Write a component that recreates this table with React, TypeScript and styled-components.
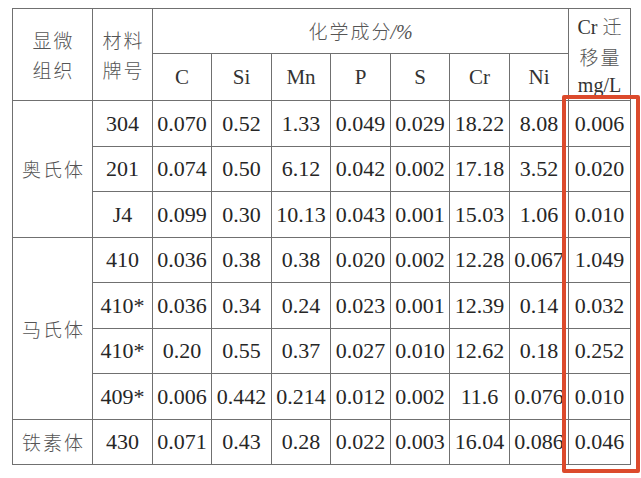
import React from "react";
import styled, { createGlobalStyle } from "styled-components";

const Global = createGlobalStyle`
  html, body { margin: 0; padding: 0; background: #ffffff; }
  body { width: 641px; height: 478px; overflow: hidden; }
`;

const Page = styled.div`
  position: relative;
  width: 641px;
  height: 478px;
  padding: 8px 0 0 12px;
  box-sizing: border-box;
  background: #fff;
`;

const Table = styled.table`
  border-collapse: collapse;
  table-layout: fixed;
  width: 618px;
  font-family: "Liberation Serif", "Noto Sans CJK SC", serif;
  font-size: 22px;
  color: #262626;
  td, th {
    border: 1px solid #707070;
    padding: 0;
    text-align: center;
    vertical-align: middle;
    font-weight: 400;
    white-space: nowrap;
    overflow: visible;
  }
`;

const Row = styled.tr<{ $h: number }>`
  height: ${(p) => p.$h}px;
`;

const Han = styled.span<{ $size?: number }>`
  font-family: "Noto Sans CJK SC", sans-serif;
  font-weight: 300;
  font-size: ${(p) => p.$size ?? 19}px;
  letter-spacing: 2px;
  margin-right: -2px;
  color: #555;
`;

const Lines = styled.div<{ $lh: number; $shift?: number }>`
  display: flex;
  flex-direction: column;
  align-items: center;
  line-height: ${(p) => p.$lh}px;
  padding-top: ${(p) => p.$shift ?? 0}px;
`;

const Sym = styled.span`
  font-size: 21px;
  color: #333;
`;

const Unit = styled.span`
  font-size: 20px;
  color: #333;
`;

const Slash = styled.span`
  font-family: "Liberation Serif", serif;
  font-style: italic;
  font-size: 20px;
  color: #555;
`;

const Highlight = styled.div`
  position: absolute;
  left: 562px;
  top: 95px;
  width: 78px;
  height: 378px;
  box-sizing: border-box;
  border: 4px solid #dc4a2c;
  border-radius: 2px;
  pointer-events: none;
`;

type DataRow = { grade: string; vals: string[] };

const groups: { name: string; rows: DataRow[] }[] = [
  {
    name: "奥氏体",
    rows: [
      { grade: "304", vals: ["0.070", "0.52", "1.33", "0.049", "0.029", "18.22", "8.08", "0.006"] },
      { grade: "201", vals: ["0.074", "0.50", "6.12", "0.042", "0.002", "17.18", "3.52", "0.020"] },
      { grade: "J4", vals: ["0.099", "0.30", "10.13", "0.043", "0.001", "15.03", "1.06", "0.010"] },
    ],
  },
  {
    name: "马氏体",
    rows: [
      { grade: "410", vals: ["0.036", "0.38", "0.38", "0.020", "0.002", "12.28", "0.067", "1.049"] },
      { grade: "410*", vals: ["0.036", "0.34", "0.24", "0.023", "0.001", "12.39", "0.14", "0.032"] },
      { grade: "410*", vals: ["0.20", "0.55", "0.37", "0.027", "0.010", "12.62", "0.18", "0.252"] },
      { grade: "409*", vals: ["0.006", "0.442", "0.214", "0.012", "0.002", "11.6", "0.076", "0.010"] },
    ],
  },
  {
    name: "铁素体",
    rows: [
      { grade: "430", vals: ["0.071", "0.43", "0.28", "0.022", "0.003", "16.04", "0.086", "0.046"] },
    ],
  },
];

const widths = [80, 60, 59, 60, 59, 60, 59, 60, 59, 62];
const elements = ["C", "Si", "Mn", "P", "S", "Cr", "Ni"];

export default function App() {
  let idx = 0;
  return (
    <Page>
      <Global />
      <Table>
        <colgroup>
          {widths.map((w, i) => (
            <col key={i} style={{ width: w }} />
          ))}
        </colgroup>
        <thead>
          <Row $h={44}>
            <th rowSpan={2}>
              <Lines $lh={30}>
                <Han>显微</Han>
                <Han>组织</Han>
              </Lines>
            </th>
            <th rowSpan={2}>
              <Lines $lh={30}>
                <Han>材料</Han>
                <Han>牌号</Han>
              </Lines>
            </th>
            <th colSpan={7}>
              <Han>化学成分</Han>
              <Slash>/%</Slash>
            </th>
            <th rowSpan={2}>
              <Lines $lh={29} $shift={2}>
                <span>
                  <Unit>Cr </Unit>
                  <Han>迁</Han>
                </span>
                <Han>移量</Han>
                <Unit>mg/L</Unit>
              </Lines>
            </th>
          </Row>
          <Row $h={45}>
            {elements.map((e) => (
              <th key={e}>
                <Sym>{e}</Sym>
              </th>
            ))}
          </Row>
        </thead>
        <tbody>
          {groups.map((g) =>
            g.rows.map((r, i) => {
              const h = idx % 2 === 0 ? 46 : 45;
              idx++;
              return (
                <Row $h={h} key={g.name + i}>
                  {i === 0 && (
                    <td rowSpan={g.rows.length}>
                      <Han>{g.name}</Han>
                    </td>
                  )}
                  <td>{r.grade}</td>
                  {r.vals.map((v, j) => (
                    <td key={j}>{v}</td>
                  ))}
                </Row>
              );
            })
          )}
        </tbody>
      </Table>
      <Highlight />
    </Page>
  );
}
